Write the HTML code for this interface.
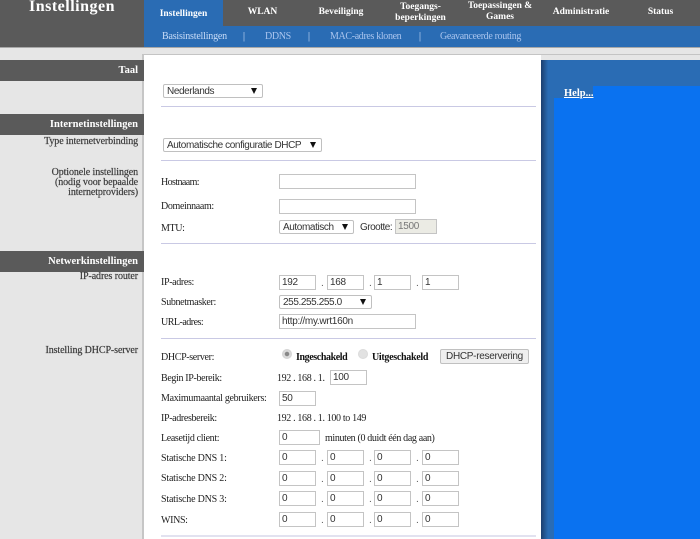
<!DOCTYPE html>
<html><head><meta charset="utf-8">
<style>
html,body{margin:0;padding:0;background:#e6e6e6}
body{width:700px;height:539px;overflow:hidden;position:relative;font-family:"Liberation Serif",serif;font-size:10px;color:#222}
#w{position:absolute;left:0;top:0;width:700px;height:539px;overflow:hidden;filter:blur(.3px)}
.a{position:absolute}
.t{position:absolute;white-space:nowrap;line-height:12px;margin-top:1px;letter-spacing:-.35px}
.r{position:absolute;right:562px;text-align:right;white-space:nowrap;line-height:10px;font-size:10px;letter-spacing:-.1px;color:#3a3a3a;-webkit-text-stroke:.2px #3a3a3a}
.bar{position:absolute;left:0;width:144px;height:21px;background:#5a5a5a;color:#fff;text-align:right;font-weight:bold;line-height:21px;box-sizing:border-box;padding-right:6px;font-size:10.5px}
.n{position:absolute;color:#fff;font-weight:bold;text-align:center;font-size:9.5px;white-space:nowrap}
.s{position:absolute;top:31px;color:#a9c4ee;font-size:10px;line-height:12px;white-space:nowrap;letter-spacing:-.35px}
.hr{position:absolute;left:161px;width:375px;height:1px;background:#c9c9e4}
.i{position:absolute;box-sizing:border-box;height:15px;border:1px solid #c4c4c4;background:#fff;font:10px/13px "Liberation Sans",sans-serif;letter-spacing:-.3px;color:#333;padding-left:2px;white-space:nowrap;overflow:hidden}
.sel{position:absolute;box-sizing:border-box;height:14px;border:1px solid #c0c0c0;border-radius:2px;background:#fff;font:10px/14px "Liberation Sans",sans-serif;letter-spacing:-.4px;color:#333;padding-left:3px;white-space:nowrap}
.sel b{position:absolute;right:5px;top:3px;width:0;height:0;border-left:3px solid transparent;border-right:3px solid transparent;border-top:6px solid #111}
.d{position:absolute;font:10px/12px "Liberation Sans",sans-serif;color:#555}
.rad{position:absolute;width:10px;height:10px;border-radius:50%;background:radial-gradient(circle,#e2e2e2 50%,#c8c8c8)}
.rad.on{background:radial-gradient(circle,#888 0 28%,#ddd 36%,#c8c8c8)}
</style></head><body><div id="w">
<div class="a" style="left:0;top:0;width:700px;height:47px;background:#5a5a5a"></div>
<div class="a" style="left:0;top:47px;width:700px;height:1px;background:#a8a8a8"></div>
<div class="a" style="left:144px;top:26px;width:556px;height:21px;background:#2a6cb4"></div>
<div class="a" style="left:144px;top:0;width:79px;height:26px;background:#2a6cb4"></div>
<div class="t" style="left:29px;top:-2px;margin:0;font-size:16px;line-height:18px;font-weight:bold;color:#fff;letter-spacing:.5px">Instellingen</div>
<div class="n" style="left:144px;width:79px;top:8px;line-height:12px">Instellingen</div>
<div class="n" style="left:223px;width:79px;top:6px;line-height:12px">WLAN</div>
<div class="n" style="left:302px;width:78px;top:6px;line-height:12px">Beveiliging</div>
<div class="n" style="left:381px;width:79px;top:2px;line-height:11px">Toegangs-<br>beperkingen</div>
<div class="n" style="left:460px;width:80px;top:1px;line-height:11px">Toepassingen &amp;<br>Games</div>
<div class="n" style="left:541px;width:80px;top:6px;line-height:12px">Administratie</div>
<div class="n" style="left:621px;width:79px;top:6px;line-height:12px">Status</div>
<div class="s" style="left:162px;color:#c8dcf8;letter-spacing:-.2px">Basisinstellingen</div>
<div class="s" style="left:243px;color:#d0e0f8">|</div>
<div class="s" style="left:265px">DDNS</div>
<div class="s" style="left:308px;color:#d0e0f8">|</div>
<div class="s" style="left:330px">MAC-adres klonen</div>
<div class="s" style="left:419px;color:#d0e0f8">|</div>
<div class="s" style="left:440px">Geavanceerde routing</div>

<div class="a" style="left:142px;top:54px;width:2px;height:485px;background:#c6c6c6"></div>
<div class="a" style="left:144px;top:54px;width:397px;height:485px;background:#fff"></div>
<div class="a" style="left:142px;top:54px;width:558px;height:1px;background:#c4c4c4"></div>

<div class="a" style="left:541px;top:60px;width:159px;height:479px;background:#2a6cb4"></div>
<div class="a" style="left:541px;top:60px;width:13px;height:479px;background:linear-gradient(90deg,#1c3f6e,#2a6cb4 55%)"></div>
<div class="a" style="left:593px;top:86px;width:107px;height:12px;background:#0a72f0"></div>
<div class="a" style="left:554px;top:98px;width:146px;height:441px;background:#0a72f0"></div>
<div class="t" style="left:564px;top:87px;color:#fff;font-weight:bold;text-decoration:underline;font-size:10.5px;letter-spacing:0">Help...</div>

<div class="bar" style="top:60px">Taal</div>
<div class="bar" style="top:114px">Internetinstellingen</div>
<div class="bar" style="top:251px">Netwerkinstellingen</div>
<div class="r" style="top:137px">Type internetverbinding</div>
<div class="r" style="top:168px">Optionele instellingen<br>(nodig voor bepaalde<br>internetproviders)</div>
<div class="r" style="top:272px">IP-adres router</div>
<div class="r" style="top:346px">Instelling DHCP-server</div>

<div class="sel" style="left:163px;top:84px;width:100px">Nederlands<b></b></div>
<div class="hr" style="top:106px"></div>
<div class="sel" style="left:163px;top:138px;width:159px">Automatische configuratie DHCP<b></b></div>
<div class="hr" style="top:160px"></div>

<div class="t" style="left:161px;top:176px;letter-spacing:-.6px">Hostnaam:</div>
<div class="i" style="left:279px;top:174px;width:137px"></div>
<div class="t" style="left:161px;top:200px">Domeinnaam:</div>
<div class="i" style="left:279px;top:199px;width:137px"></div>
<div class="t" style="left:161px;top:222px">MTU:</div>
<div class="sel" style="left:279px;top:220px;width:75px">Automatisch<b></b></div>
<div class="d" style="left:360px;top:222px;color:#333;letter-spacing:-.5px">Grootte:</div>
<div class="i" style="left:395px;top:219px;width:42px;background:#ebebe4;color:#777">1500</div>
<div class="hr" style="top:243px"></div>

<div class="t" style="left:161px;top:276px">IP-adres:</div>
<div class="i" style="left:279px;top:275px;width:37px">192</div>
<div class="d" style="left:321px;top:278px">.</div>
<div class="i" style="left:327px;top:275px;width:37px">168</div>
<div class="d" style="left:369px;top:278px">.</div>
<div class="i" style="left:374px;top:275px;width:37px">1</div>
<div class="d" style="left:416px;top:278px">.</div>
<div class="i" style="left:422px;top:275px;width:37px">1</div>
<div class="t" style="left:161px;top:296px">Subnetmasker:</div>
<div class="sel" style="left:279px;top:295px;width:93px">255.255.255.0<b></b></div>
<div class="t" style="left:161px;top:316px;letter-spacing:-.5px">URL-adres:</div>
<div class="i" style="left:279px;top:314px;width:137px">http://my.wrt160n</div>
<div class="hr" style="top:338px"></div>

<div class="t" style="left:161px;top:351px">DHCP-server:</div>
<div class="rad on" style="left:282px;top:349px"></div>
<div class="t" style="left:296px;top:351px;font-weight:bold;color:#111;letter-spacing:-.4px">Ingeschakeld</div>
<div class="rad" style="left:358px;top:349px"></div>
<div class="t" style="left:372px;top:351px;font-weight:bold;color:#111;letter-spacing:-.3px">Uitgeschakeld</div>
<div class="a" style="left:440px;top:349px;width:89px;height:15px;box-sizing:border-box;border:1px solid #c0c0c0;border-radius:2px;background:#efefef;font:10px/13px 'Liberation Sans',sans-serif;letter-spacing:-.3px;color:#333;text-align:center;white-space:nowrap">DHCP-reservering</div>

<div class="t" style="left:161px;top:372px">Begin IP-bereik:</div>
<div class="t" style="left:277px;top:372px">192 . 168 . 1.</div>
<div class="i" style="left:330px;top:370px;width:37px">100</div>
<div class="t" style="left:161px;top:392px;letter-spacing:-.3px">Maximumaantal gebruikers:</div>
<div class="i" style="left:279px;top:391px;width:37px">50</div>
<div class="t" style="left:161px;top:412px">IP-adresbereik:</div>
<div class="t" style="left:277px;top:412px">192 . 168 . 1. 100 to 149</div>
<div class="t" style="left:161px;top:432px">Leasetijd client:</div>
<div class="i" style="left:279px;top:430px;width:41px">0</div>
<div class="t" style="left:325px;top:432px">minuten (0 duidt één dag aan)</div>

<div class="t" style="left:161px;top:452px;letter-spacing:-.2px">Statische DNS 1:</div>
<div class="i" style="left:279px;top:450px;width:37px">0</div><div class="d" style="left:321px;top:453px">.</div>
<div class="i" style="left:327px;top:450px;width:37px">0</div><div class="d" style="left:369px;top:453px">.</div>
<div class="i" style="left:374px;top:450px;width:37px">0</div><div class="d" style="left:416px;top:453px">.</div>
<div class="i" style="left:422px;top:450px;width:37px">0</div>

<div class="t" style="left:161px;top:472px;letter-spacing:-.2px">Statische DNS 2:</div>
<div class="i" style="left:279px;top:471px;width:37px">0</div><div class="d" style="left:321px;top:474px">.</div>
<div class="i" style="left:327px;top:471px;width:37px">0</div><div class="d" style="left:369px;top:474px">.</div>
<div class="i" style="left:374px;top:471px;width:37px">0</div><div class="d" style="left:416px;top:474px">.</div>
<div class="i" style="left:422px;top:471px;width:37px">0</div>

<div class="t" style="left:161px;top:493px;letter-spacing:-.2px">Statische DNS 3:</div>
<div class="i" style="left:279px;top:491px;width:37px">0</div><div class="d" style="left:321px;top:494px">.</div>
<div class="i" style="left:327px;top:491px;width:37px">0</div><div class="d" style="left:369px;top:494px">.</div>
<div class="i" style="left:374px;top:491px;width:37px">0</div><div class="d" style="left:416px;top:494px">.</div>
<div class="i" style="left:422px;top:491px;width:37px">0</div>

<div class="t" style="left:161px;top:514px">WINS:</div>
<div class="i" style="left:279px;top:512px;width:37px">0</div><div class="d" style="left:321px;top:515px">.</div>
<div class="i" style="left:327px;top:512px;width:37px">0</div><div class="d" style="left:369px;top:515px">.</div>
<div class="i" style="left:374px;top:512px;width:37px">0</div><div class="d" style="left:416px;top:515px">.</div>
<div class="i" style="left:422px;top:512px;width:37px">0</div>
<div class="hr" style="top:535px;height:2px;background:#e2e2f0"></div>
</div></body></html>
